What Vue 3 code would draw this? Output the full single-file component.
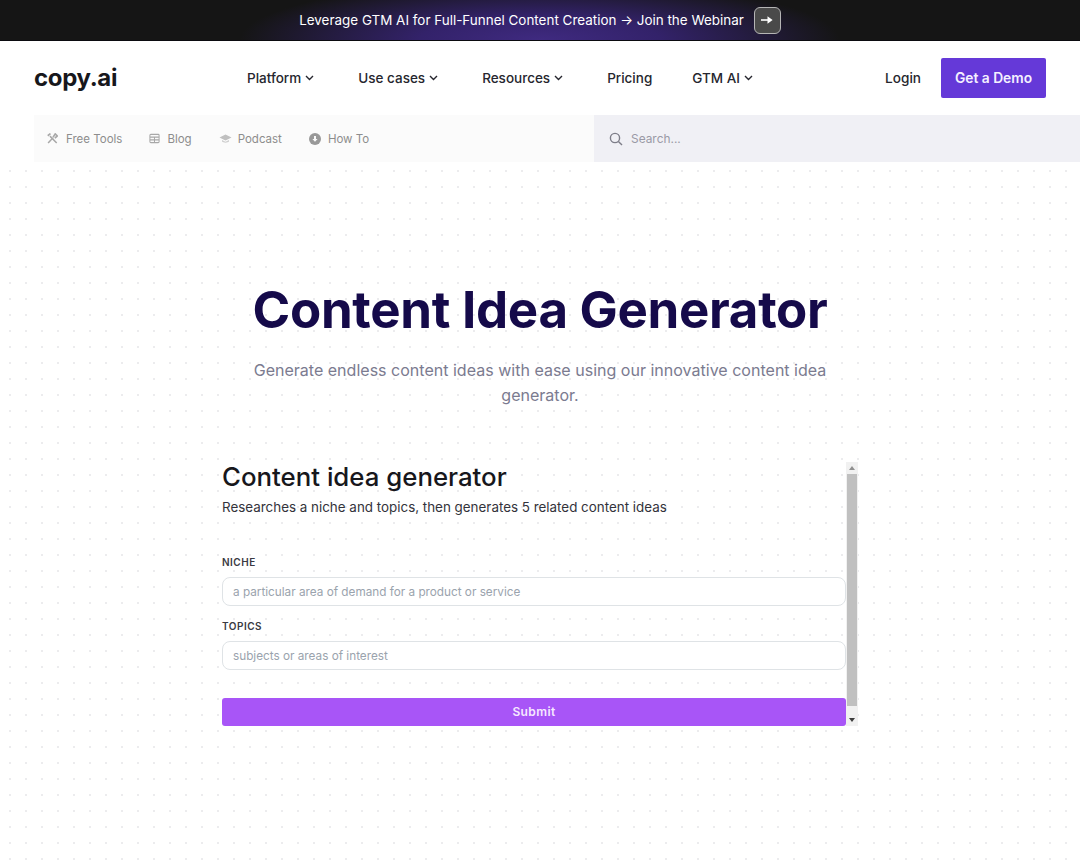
<script setup>
const links = [
  { label: 'Platform', chevron: true },
  { label: 'Use cases', chevron: true },
  { label: 'Resources', chevron: true },
  { label: 'Pricing', chevron: false },
  { label: 'GTM AI', chevron: true },
]
</script>

<template>
  <div class="page">
    <div class="banner">
      <span>Leverage GTM AI for Full-Funnel Content Creation → Join the Webinar</span>
      <span class="banner-btn">
        <svg width="14" height="10" viewBox="0 0 14 10"><path d="M1 5h7" stroke="#fff" stroke-width="1.6" fill="none"/><path d="M7.5 1.2 12.6 5l-5.1 3.8z" fill="#fff"/></svg>
      </span>
    </div>

    <header class="nav">
      <div class="logo">copy.ai</div>
      <nav class="links">
        <a v-for="l in links" :key="l.label" class="link" :class="{ plain: !l.chevron }">
          {{ l.label }}
          <svg v-if="l.chevron" width="9" height="6" viewBox="0 0 9 6"><path d="M1 1l3.5 3.5L8 1" stroke="#26262e" stroke-width="1.4" fill="none"/></svg>
        </a>
      </nav>
      <div class="actions">
        <a class="login">Login</a>
        <a class="demo">Get a Demo</a>
      </div>
    </header>

    <div class="subbar">
      <div class="cats">
        <a class="cat tools">
          <svg width="11" height="11" viewBox="0 0 12 12" fill="none" stroke="#a8a8a8"><path stroke-width="1.6" d="M1.2 11 6.6 5.2M3.2 3.4 10.6 11"/><path stroke-width="1.8" d="M.8 3 3.8 .6M6.6 4.6 9 1l2.2 2.2-2.6 2.4"/></svg>
          Free Tools
        </a>
        <a class="cat">
          <svg width="11" height="11" viewBox="0 0 12 11" fill="none" stroke="#a8a8a8" stroke-width="1.1"><rect x="1" y="1" width="10" height="9" rx="1"/><path d="M1 4h10M1 7h10M6 4v6"/></svg>
          Blog
        </a>
        <a class="cat podcast">
          <svg width="13" height="10" viewBox="0 0 13 10"><path d="M6.5 .5 12.5 3.5 6.5 6.5 .5 3.5z" fill="#c0c0c0"/><path d="M3 6v1.6c1 1.4 6 1.4 7 0V6L6.5 7.7z" fill="#cfcfcf"/></svg>
          Podcast
        </a>
        <a class="cat">
          <svg width="12" height="12" viewBox="0 0 12 12"><circle cx="6" cy="6" r="6" fill="#999"/><path d="M5 3h2v3h1.6L6 8.8 3.4 6H5z" fill="#fafafa"/></svg>
          How To
        </a>
      </div>
      <div class="search">
        <svg width="14" height="14" viewBox="0 0 14 14" fill="none" stroke="#7d7d88" stroke-width="1.4"><circle cx="6" cy="6" r="4.6"/><path d="M9.4 9.4 13 13"/></svg>
        <span>Search...</span>
      </div>
    </div>

    <main class="main">
      <h1>Content Idea Generator</h1>
      <p class="lead">Generate endless content ideas with ease using our innovative content idea generator.</p>

      <section class="embed">
        <div class="form">
          <h2>Content idea generator</h2>
          <p class="desc">Researches a niche and topics, then generates 5 related content ideas</p>
          <label class="first">NICHE</label>
          <input placeholder="a particular area of demand for a product or service" />
          <label>TOPICS</label>
          <input placeholder="subjects or areas of interest" />
          <button>Submit</button>
        </div>
        <div class="scrollbar">
          <span class="arrow up"></span>
          <span class="thumb"></span>
          <span class="arrow down"></span>
        </div>
      </section>
    </main>
  </div>
</template>

<style>
html, body { margin: 0; background: #fff; }
</style>

<style scoped>
.page {
  height: 864px;
  overflow: hidden;
  font-family: Inter, "Liberation Sans", sans-serif;
  color: #1c1c22;
  background: #fff;
}
.banner {
  height: 41px;
  box-sizing: border-box;
  border-bottom: 1px solid #0b0b10;
  display: flex;
  align-items: center;
  justify-content: center;
  gap: 10px;
  color: #fff;
  font-size: 13.45px;
  background: radial-gradient(ellipse 300px 60px at 50% 100%, #3f2a80 0%, #33226a 40%, rgba(21, 21, 21, 0) 100%), #151515;
}
.banner-btn {
  width: 27px;
  height: 27px;
  box-sizing: border-box;
  border: 1px solid #b5b5b5;
  border-radius: 6px;
  background: #4a4a4a;
  display: flex;
  align-items: center;
  justify-content: center;
}
.nav {
  height: 74px;
  box-sizing: border-box;
  padding: 0 34px;
  display: flex;
  align-items: center;
}
.logo {
  width: 213px;
  font-size: 24px;
  font-weight: 700;
  color: #17171c;
  letter-spacing: -0.35px;
  margin-top: -1px;
}
.links {
  display: flex;
  gap: 44px;
  font-size: 13.5px;
  font-weight: 500;
}
.link {
  display: flex;
  align-items: center;
  gap: 4px;
  color: #26262e;
}
.link.plain { margin-right: -4px; }
.actions {
  margin-left: auto;
  display: flex;
  align-items: center;
  gap: 20px;
}
.login { font-size: 13.6px; font-weight: 500; color: #26262e; }
.demo {
  width: 105px;
  height: 40px;
  display: flex;
  align-items: center;
  justify-content: center;
  border-radius: 2px;
  background: #6539d8;
  color: #f4f0ff;
  font-size: 13.8px;
  font-weight: 600;
}
.subbar {
  height: 47px;
  margin-left: 34px;
  display: flex;
}
.cats {
  width: 560px;
  box-sizing: border-box;
  padding-left: 13px;
  background: #fbfbfb;
  display: flex;
  align-items: center;
  gap: 27px;
  font-size: 11.5px;
  color: #8d8d8d;
}
.cat { display: flex; align-items: center; gap: 7px; }
.tools { gap: 8px; }
.podcast { gap: 6px; }
.search {
  flex: 1;
  background: #f0f0f5;
  display: flex;
  align-items: center;
  gap: 8px;
  padding-left: 15px;
  font-size: 11.9px;
  color: #9a9aa6;
}
.main {
  height: 702px;
  box-sizing: border-box;
  padding-top: 120px;
  background-image: radial-gradient(circle at center, #ececee 0.8px, transparent 1.1px);
  background-size: 16px 16px;
  background-position: 2px 1px;
  display: flex;
  flex-direction: column;
  align-items: center;
}
h1 {
  margin: 0;
  font-size: 51px;
  line-height: 56px;
  font-weight: 700;
  color: #150a4a;
  letter-spacing: -0.3px;
  white-space: nowrap;
}
.lead {
  margin: 20px 0 0;
  width: 600px;
  text-align: center;
  font-size: 16.05px;
  line-height: 25px;
  color: #7b7b90;
}
.embed {
  margin-top: 54px;
  width: 636px;
  height: 264px;
  display: flex;
}
.form {
  width: 624px;
  display: flex;
  flex-direction: column;
}
h2 {
  margin: 0;
  font-size: 25.8px;
  line-height: 30px;
  font-weight: 500;
  color: #17171c;
}
.desc {
  margin: 5px 0 0;
  font-size: 13.4px;
  line-height: 20px;
  color: #33333b;
}
label {
  margin-top: 13px;
  font-size: 10px;
  line-height: 14px;
  font-weight: 600;
  letter-spacing: 0.5px;
  color: #3a3a42;
}
label.first { margin-top: 38px; }
input {
  margin-top: 8px;
  height: 30px;
  box-sizing: border-box;
  width: 624px;
  border: 1px solid #dfe3e6;
  border-radius: 8px;
  background: #fff;
  padding: 1px 10px 0;
  font-family: inherit;
  font-size: 11.75px;
  outline: none;
}
input::placeholder { color: #9aa3ad; opacity: 1; }
button {
  margin-top: 28px;
  height: 29px;
  border: 0;
  border-radius: 3px;
  background: #a855f7;
  color: #f6e9ff;
  font-family: inherit;
  font-size: 12px;
  font-weight: 600;
  letter-spacing: 0.4px;
  padding: 0 0 1px;
}
.scrollbar {
  width: 12px;
  background: #f1f1f1;
  display: flex;
  flex-direction: column;
  align-items: center;
}
.arrow { height: 12px; width: 12px; position: relative; flex: none; }
.arrow::after {
  content: "";
  position: absolute;
  left: 3px;
  border-left: 3px solid transparent;
  border-right: 3px solid transparent;
}
.up::after { top: 4px; border-bottom: 4px solid #8f8f8f; }
.down::after { top: 4px; border-top: 4px solid #3c3c3c; }
.thumb { flex: 1; width: 10px; background: #c0c0c0; margin-bottom: 8px; }
</style>
